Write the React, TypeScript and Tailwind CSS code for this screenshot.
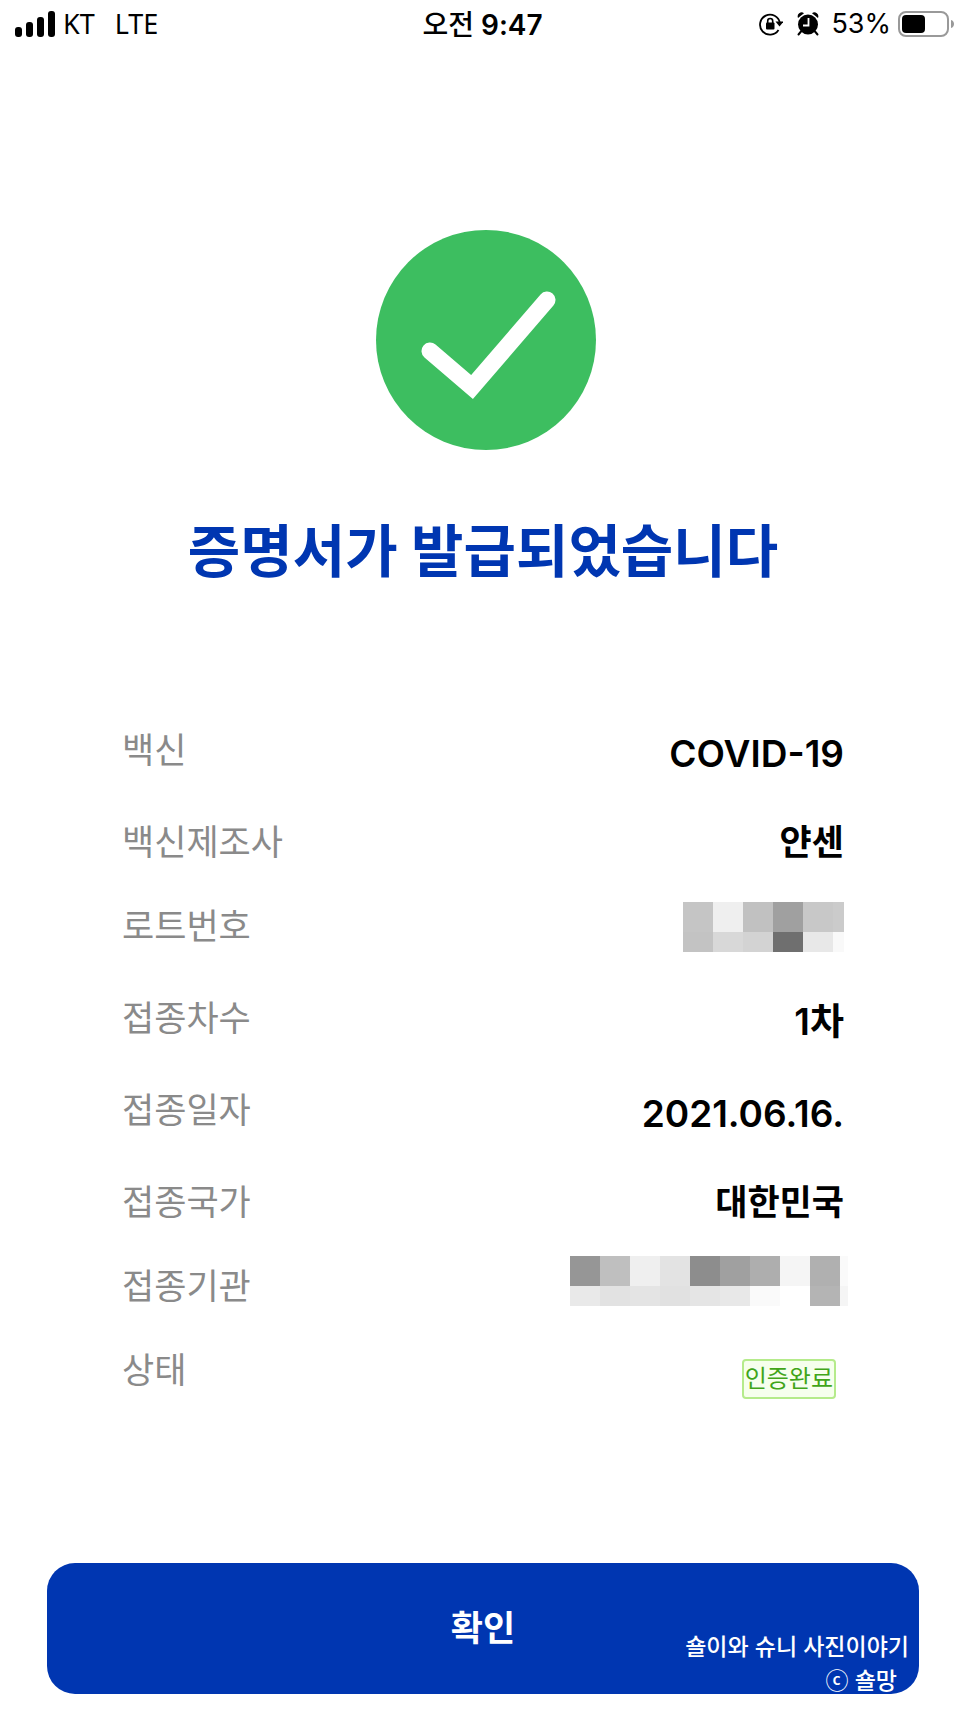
import type { ReactNode } from "react";

const LOT_CELLS = [
  ["bg-[#c5c5c5]", "bg-[#efefef]", "bg-[#c1c1c1]", "bg-[#a0a0a0]", "bg-[#c8c8c8]", "bg-[#cbcbcb]"],
  ["bg-[#c3c3c3]", "bg-[#d8d8d8]", "bg-[#d3d3d3]", "bg-[#6f6f6f]", "bg-[#e8e8e8]", "bg-[#f9f9f9]"],
];

const CLINIC_CELLS = [
  [
    "bg-[#969696]", "bg-[#bfbfbf]", "bg-[#efefef]", "bg-[#e3e3e3]", "bg-[#8d8d8d]",
    "bg-[#a0a0a0]", "bg-[#aeaeae]", "bg-[#f5f5f5]", "bg-[#b0b0b0]", "bg-[#fafafa]",
  ],
  [
    "bg-[#e9e9e9]", "bg-[#e2e2e2]", "bg-[#e4e4e4]", "bg-[#e1e1e1]", "bg-[#e5e5e5]",
    "bg-[#e8e8e8]", "bg-[#fafafa]", "bg-white", "bg-[#b4b4b4]", "bg-[#f5f5f5]",
  ],
];

// Hides a private value behind grey blocks; the last column is cut short.
function Mosaic({ rows, last }: { rows: string[][]; last: string }) {
  return (
    <div role="img" aria-label="비공개">
      {rows.map((cells, r) => (
        <div key={r} className={r === 0 ? "flex h-[30px]" : "flex h-5"}>
          {cells.map((color, c) => (
            <span key={c} className={`${color} ${c === cells.length - 1 ? last : "w-[30px]"}`} />
          ))}
        </div>
      ))}
    </div>
  );
}

type RowProps = {
  label: string;
  short?: boolean;
  numeric?: boolean;
  children: ReactNode;
};

function Row({ label, short, numeric, children }: RowProps) {
  return (
    <div className={`flex items-end justify-between ${short ? "h-[84px]" : "h-[92px]"}`}>
      <dt className="text-[35px] leading-[52px] text-[#8a8a8a]">{label}</dt>
      <dd
        className={`leading-[52px] font-semibold text-black ${numeric ? "-mb-1 text-[37px]" : "text-[35px]"}`}
      >
        {children}
      </dd>
    </div>
  );
}

function StatusBar() {
  return (
    <header className="grid h-12 grid-cols-3 items-center pr-3 pl-[15px] text-[27px] leading-8 text-black">
      <div className="flex items-center font-['Noto_Sans',sans-serif]">
        <svg className="mr-2 h-[26px] w-10" viewBox="0 0 40 26" aria-hidden="true">
          <rect x="0" y="16" width="7" height="10" rx="3" />
          <rect x="11" y="11" width="7" height="15" rx="3" />
          <rect x="22" y="6" width="7" height="20" rx="3" />
          <rect x="33" y="0" width="7" height="26" rx="3" />
        </svg>
        <span>KT</span>
        <span className="ml-5">LTE</span>
      </div>
      <div className="pt-px pr-1 text-center text-[28px] font-semibold">
        <span className="font-medium">오전</span> 9:47
      </div>
      <div className="flex items-center justify-end">
        <svg className="h-6 w-6" viewBox="0 0 24 24" fill="none" stroke="black" aria-hidden="true">
          <path d="M19.500 18A10 10 0 1 1 20.900 11" strokeWidth="1.800" />
          <path d="M16.500 9.500h8l-4 5z" fill="black" stroke="none" />
          <rect x="7" y="10.500" width="8.500" height="7" rx="1" fill="black" stroke="none" />
          <path d="M8.700 11V9a2.500 2.500 0 0 1 5 0v2" strokeWidth="1.600" />
        </svg>
        <svg className="ml-[14px] h-6 w-[22px]" viewBox="0 0 22 24" aria-hidden="true">
          <circle cx="11" cy="12.500" r="10" />
          <path d="M1 6A4 4 0 0 1 7 1.200zM21 6A4 4 0 0 0 15 1.200z" />
          <path d="M4 19.500l-2.500 3M18 19.500l2.500 3" stroke="black" strokeWidth="2" strokeLinecap="round" />
          <path d="M11.500 6v7.500H6" fill="none" stroke="white" strokeWidth="1.800" />
        </svg>
        <span className="ml-3">53%</span>
        <svg className="ml-[7px] h-[26px] w-14" viewBox="0 0 56 26" aria-hidden="true">
          <rect x="1" y="1" width="49" height="24" rx="7" fill="none" stroke="#999" strokeWidth="2" />
          <rect x="4" y="4" width="23" height="18" rx="4" />
          <path d="M53 9c4 1 4 7 0 8z" fill="#999" />
        </svg>
      </div>
    </header>
  );
}

export default function App() {
  return (
    <main className="bg-white pb-6 font-['Inter','Noto_Sans_CJK_KR',sans-serif]" lang="ko">
      <StatusBar />

      <section className="flex flex-col items-center pt-[182px]">
        <svg className="ml-[6px] h-[220px] w-[220px]" viewBox="0 0 220 220" aria-hidden="true">
          <circle cx="110" cy="110" r="110" fill="#3dbe60" />
          <path d="M54 121L96 157L171 70" fill="none" stroke="white" strokeWidth="17" strokeLinecap="round" />
        </svg>
        <h1 className="mt-[60px] text-[57px] leading-[84px] font-bold text-[#0036b1]">
          증명서가 발급되었습니다
        </h1>
      </section>

      <dl className="px-[122px] pt-[90px]">
        <Row label="백신" numeric>
          COVID-19
        </Row>
        <Row label="백신제조사">얀센</Row>
        <Row label="로트번호" short>
          <Mosaic rows={LOT_CELLS} last="w-[11px]" />
        </Row>
        <Row label="접종차수" numeric>
          1차
        </Row>
        <Row label="접종일자" numeric>
          2021.06.16.
        </Row>
        <Row label="접종국가">대한민국</Row>
        <Row label="접종기관" short>
          <div className="-mr-1 mb-[6px]">
            <Mosaic rows={CLINIC_CELLS} last="w-2" />
          </div>
        </Row>
        <Row label="상태" short>
          <span className="mr-2 -mb-[3px] block rounded-sm border-2 border-[#b5eb8b] bg-[#f6ffed] px-px text-2xl leading-9 font-normal text-[#41a519]">
            인증완료
          </span>
        </Row>
      </dl>

      <div className="relative mx-[47px] mt-[167px]">
        <button
          type="button"
          className="h-[131px] w-full rounded-[28px] bg-[#0036b1] text-[35px] font-semibold text-white"
        >
          확인
        </button>
        <p className="pointer-events-none absolute right-[10px] -bottom-1 text-right text-[23px] leading-[34px] font-medium text-white">
          숄이와 슈니 사진이야기
          <span className="block pr-3">ⓒ 숄망</span>
        </p>
      </div>
    </main>
  );
}
